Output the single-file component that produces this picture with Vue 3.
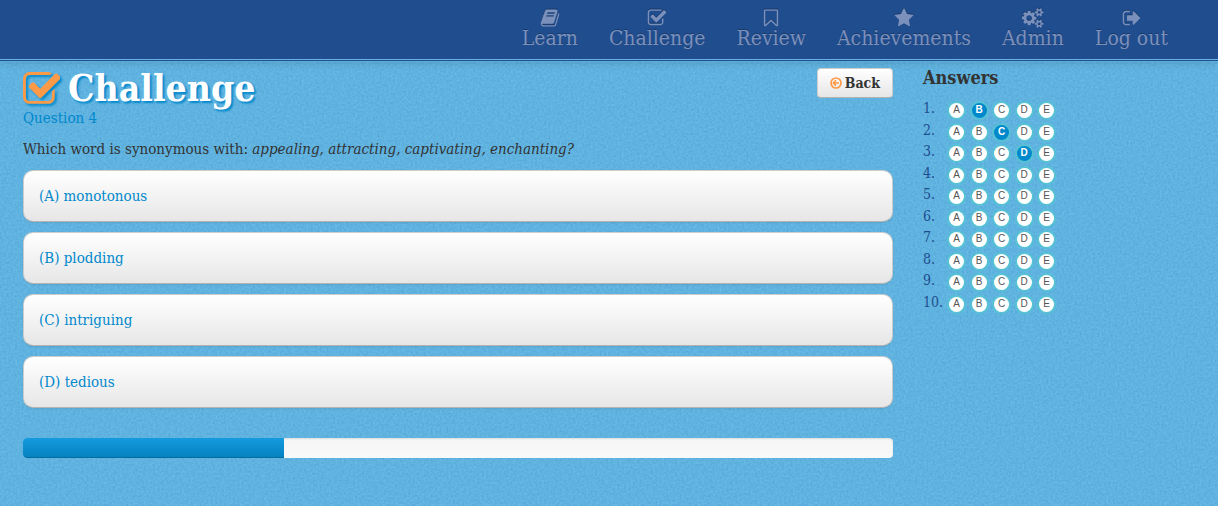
<script setup>
const navItems = [
  {
    label: 'Learn',
    box: '0 0 1792 1792',
    path: 'M1703 478q40 57 18 129l-275 906q-19 64-76.5 107.5t-122.5 43.5h-923q-77 0-148.5-53.5t-99.5-131.5q-24-67-2-127 0-4 3-27t4-37q1-8-3-21.5t-3-19.5q2-11 8-21t16.5-23.5 16.5-23.5q23-38 45-91.5t30-91.5q3-10 .5-30t-.5-28q3-11 17-28t17-23q21-36 42-92t25-90q1-9-2.5-32t.5-28q4-13 22-30.5t22-22.5q19-26 42.5-84.5t27.5-96.5q1-8-3-25.5t-2-26.5q2-8 9-18t18-23 17-21q8-12 16.5-30.5t15-35 16-36 19.5-32 26.5-23.5 36-11.5 47.5 5.5l-1 3q38-9 51-9h761q74 0 114 56t18 130l-274 906q-36 119-71.5 153.5t-128.5 34.5h-869q-27 0-38 15-11 16-1 43 24 70 144 70h923q29 0 56-15.5t35-41.5l300-987q7-22 5-57 38 15 59 43zm-1064 2q-4 13 2 22.5t20 9.5h608q13 0 25.5-9.5t16.5-22.5l21-64q4-13-2-22.5t-20-9.5h-608q-13 0-25.5 9.5t-16.5 22.5zm-83 256q-4 13 2 22.5t20 9.5h608q13 0 25.5-9.5t16.5-22.5l21-64q4-13-2-22.5t-20-9.5h-608q-13 0-25.5 9.5t-16.5 22.5z'
  },
  {
    label: 'Challenge',
    box: '0 0 1792 1792',
    path: 'M1472 930v318q0 119-84.5 203.5t-203.5 84.5h-832q-119 0-203.5-84.5t-84.5-203.5v-832q0-119 84.5-203.5t203.5-84.5h832q63 0 117 25 15 7 18 23 3 17-9 29l-49 49q-10 10-23 10-3 0-9-2-23-6-45-6h-832q-66 0-113 47t-47 113v832q0 66 47 113t113 47h832q66 0 113-47t47-113v-254q0-13 9-22l64-64q10-10 23-10 6 0 12 3 20 8 20 29zm231-489l-814 814q-24 24-57 24t-57-24l-430-430q-24-24-24-57t24-57l110-110q24-24 57-24t57 24l263 263 647-647q24-24 57-24t57 24l110 110q24 24 24 57t-24 57z'
  },
  {
    label: 'Review',
    box: '0 0 1792 1792',
    path: 'M1408 256h-1024v1242l423-406 89-85 89 85 423 406v-1242zm12-128q23 0 44 9 33 13 52.5 41t19.5 62v1289q0 34-19.5 62t-52.5 41q-19 8-44 8-48 0-83-32l-441-424-441 424q-36 33-83 33-23 0-44-9-33-13-52.5-41t-19.5-62v-1289q0-34 19.5-62t52.5-41q21-9 44-9h1048z'
  },
  {
    label: 'Achievements',
    box: '0 0 1792 1792',
    path: 'M1728 647q0 22-26 48l-363 354 86 500q1 7 1 20 0 21-10.5 35.5t-30.5 14.5q-19 0-40-12l-449-236-449 236q-22 12-40 12-21 0-31.5-14.5t-10.5-35.5q0-6 2-20l86-500-364-354q-25-27-25-48 0-37 56-46l502-73 225-455q19-41 49-41t49 41l225 455 502 73q56 9 56 46z'
  },
  {
    label: 'Admin',
    box: '0 0 1920 1792',
    path: 'M896 896q0-106-75-181t-181-75-181 75-75 181 75 181 181 75 181-75 75-181zm768 512q0-52-38-90t-90-38-90 38-38 90q0 53 37.5 90.5t90.5 37.5 90.5-37.5 37.5-90.5zm0-1024q0-52-38-90t-90-38-90 38-38 90q0 53 37.5 90.5t90.5 37.5 90.5-37.5 37.5-90.5zm-384 421v185q0 10-7 19.5t-16 10.5l-155 24q-11 35-32 76 34 48 90 115 7 11 7 20 0 12-7 19-23 30-82.5 89.5t-78.5 59.5q-11 0-21-7l-115-90q-37 19-77 31-11 108-23 155-7 24-30 24h-186q-11 0-20-7.5t-10-17.5l-23-153q-34-10-75-31l-118 89q-7 7-20 7-11 0-21-8-144-133-144-160 0-9 7-19 10-14 41-53t47-61q-23-44-35-82l-152-24q-10-1-17-9.5t-7-19.5v-185q0-10 7-19.5t16-10.5l155-24q11-35 32-76-34-48-90-115-7-11-7-20 0-12 7-20 22-30 82-89t79-59q11 0 21 7l115 90q34-18 77-32 11-108 23-154 7-24 30-24h186q11 0 20 7.5t10 17.5l23 153q34 10 75 31l118-89q8-7 20-7 11 0 21 8 144 133 144 160 0 8-7 19-12 16-42 54t-45 60q23 48 34 82l152 23q10 2 17 10.5t7 19.5zm640 533v140q0 16-149 31-12 27-30 52 51 113 51 138 0 4-4 7-122 71-124 71-8 0-46-47t-52-68q-20 2-30 2t-30-2q-14 21-52 68t-46 47q-2 0-124-71-4-3-4-7 0-25 51-138-18-25-30-52-149-15-149-31v-140q0-16 149-31 13-29 30-52-51-113-51-138 0-4 4-7 4-2 35-20t59-34 30-16q8 0 46 46.5t52 67.5q20-2 30-2t30 2q51-71 92-112l6-2q4 0 124 70 4 3 4 7 0 25-51 138 17 23 30 52 149 15 149 31zm0-1024v140q0 16-149 31-12 27-30 52 51 113 51 138 0 4-4 7-122 71-124 71-8 0-46-47t-52-68q-20 2-30 2t-30-2q-14 21-52 68t-46 47q-2 0-124-71-4-3-4-7 0-25 51-138-18-25-30-52-149-15-149-31v-140q0-16 149-31 13-29 30-52-51-113-51-138 0-4 4-7 4-2 35-20t59-34 30-16q8 0 46 46.5t52 67.5q20-2 30-2t30 2q51-71 92-112l6-2q4 0 124 70 4 3 4 7 0 25-51 138 17 23 30 52 149 15 149 31z'
  },
  {
    label: 'Log out',
    box: '0 0 1664 1792',
    path: 'M704 1440q0 4 1 20t.5 26.5-3 23.5-10 19.5-20.5 6.5h-320q-119 0-203.5-84.5t-84.5-203.5v-704q0-119 84.5-203.5t203.5-84.5h320q13 0 22.5 9.5t9.5 22.5q0 4 1 20t.5 26.5-3 23.5-10 19.5-20.5 6.5h-320q-66 0-113 47t-47 113v704q0 66 47 113t113 47h312l11.5 1 11.5 3 8 5.5 7 9 2 13.5zm928-544q0 26-19 45l-544 544q-19 19-45 19t-45-19-19-45v-288h-448q-26 0-45-19t-19-45v-384q0-26 19-45t45-19h448v-288q0-26 19-45t45-19 45 19l544 544q19 19 19 45z'
  }
]
const checkPath = navItems[1].path

const options = ['(A) monotonous', '(B) plodding', '(C) intriguing', '(D) tedious']
const letters = ['A', 'B', 'C', 'D', 'E']
const answers = ['B', 'C', 'D', '', '', '', '', '', '', '']
const progress = 30
</script>

<template>
  <div class="page">
    <svg class="grain" aria-hidden="true">
      <filter id="grain-filter" x="0" y="0" width="100%" height="100%" color-interpolation-filters="sRGB">
        <feTurbulence type="fractalNoise" baseFrequency="0.45" numOctaves="2" seed="4" />
        <feColorMatrix values="0 0 0 0 0.16  0 0 0 0 0.5  0 0 0 0 0.7  0.45 0 0 0 -0.1" />
      </filter>
      <rect width="100%" height="100%" filter="url(#grain-filter)" />
    </svg>

    <header class="topbar">
      <nav class="nav">
        <a v-for="item in navItems" :key="item.label" class="nav-link" href="#">
          <svg class="nav-icon" :viewBox="item.box" aria-hidden="true"><path :d="item.path" /></svg>
          <span>{{ item.label }}</span>
        </a>
      </nav>
    </header>

    <div class="columns">
      <main>
        <div class="heading">
          <div>
            <h1 class="title">
              <svg class="title-icon" viewBox="64 128 1640 1410" aria-hidden="true"><path :d="checkPath" /></svg>
              <span>Challenge</span>
            </h1>
            <p class="subtitle">Question 4</p>
          </div>
          <button class="back" type="button">
            <svg class="back-icon" viewBox="0 0 12 12" aria-hidden="true">
              <circle cx="6" cy="6" r="5" />
              <path d="M9 6H4M6 3.4L3.4 6L6 8.6" />
            </svg>
            Back
          </button>
        </div>

        <p class="question">
          Which word is synonymous with:
          <em>appealing, attracting, captivating, enchanting?</em>
        </p>

        <div class="options">
          <a v-for="option in options" :key="option" class="option" href="#">{{ option }}</a>
        </div>

        <div class="progress" role="progressbar" aria-label="Progress" :aria-valuenow="progress" aria-valuemin="0" aria-valuemax="100">
          <div class="bar" :style="{ width: progress + '%' }"></div>
        </div>
      </main>

      <aside>
        <h2 class="side-title">Answers</h2>
        <ol class="sheet">
          <li v-for="(answer, i) in answers" :key="i" class="row">
            <span class="number">{{ i + 1 }}.</span>
            <span class="bubbles">
              <span v-for="l in letters" :key="l" class="bubble" :class="{ chosen: l === answer }">{{ l }}</span>
            </span>
          </li>
        </ol>
      </aside>
    </div>
  </div>
</template>

<style>
body {
  margin: 0;
  background: #62b5e1;
}
</style>

<style scoped>
.page {
  position: relative;
  min-height: 100vh;
  background: #68bae6;
  color: #333;
  font-family: "DejaVu Serif Condensed", "DejaVu Serif", serif;
  font-size: 15px;
  line-height: 20px;
}
.grain {
  position: absolute;
  inset: 0;
  width: 100%;
  height: 100%;
}
.topbar {
  position: relative;
  box-sizing: border-box;
  height: 62px;
  padding: 8px 50px 0 20px;
  background: linear-gradient(#204d8e 59px, #69b3e3 59px, #69b3e3 60px, #204d8e 60px, #204d8e 61px, #5aaedb 61px);
  box-shadow: 0 1px 8px rgba(0, 0, 0, 0.15);
}
.nav {
  display: flex;
  justify-content: flex-end;
  gap: 31px;
}
.nav-link {
  display: flex;
  flex-direction: column;
  align-items: center;
  color: #7b90bb;
  font-size: 21px;
  line-height: 20px;
  text-decoration: none;
  text-shadow: 0 -1px 0 rgba(0, 0, 0, 0.25);
  white-space: nowrap;
}
.nav-icon {
  height: 20px;
  fill: currentColor;
  filter: drop-shadow(0 -1px 0 rgba(0, 0, 0, 0.25));
}
.columns {
  position: relative;
  display: grid;
  grid-template-columns: 870fr 272fr;
  gap: 30px;
  padding: 6px 23px 20px;
}
.heading {
  display: flex;
  justify-content: space-between;
  align-items: flex-start;
}
.title {
  display: flex;
  align-items: center;
  gap: 8px;
  margin: 0;
  color: #fff;
  font-size: 37px;
  line-height: 40px;
  text-shadow: 2px 2px 2px #0088cc;
}
.title-icon {
  width: 37px;
  height: 32px;
  fill: #fd9a47;
  filter: drop-shadow(2px 2px 1px #0088cc);
}
.subtitle {
  margin: 0;
  color: #0088cc;
}
.back {
  display: flex;
  align-items: center;
  gap: 3px;
  padding: 4px 12px;
  border: 1px solid #ccc;
  border-bottom-color: #b3b3b3;
  border-radius: 4px;
  background: linear-gradient(#fff, #e6e6e6);
  color: #333;
  font: bold 14px/20px "DejaVu Serif Condensed", "DejaVu Serif", serif;
}
.back-icon {
  width: 12px;
  height: 12px;
  fill: none;
  stroke: #fd9a47;
  stroke-width: 1.7;
}
.question {
  margin: 11px 0;
}
.options {
  display: grid;
  gap: 10px;
}
.option {
  padding: 15px;
  border: 1px solid #ccc;
  border-bottom-color: #b3b3b3;
  border-radius: 10px;
  background: linear-gradient(#fff, #e6e6e6);
  color: #0088cc;
  text-decoration: none;
  box-shadow: 0 1px 2px rgba(0, 0, 0, 0.08);
}
.progress {
  height: 20px;
  margin-top: 30px;
  border-radius: 4px;
  overflow: hidden;
  background: linear-gradient(#f5f5f5, #f9f9f9);
  box-shadow: inset 0 1px 2px rgba(0, 0, 0, 0.1);
}
.bar {
  height: 100%;
  background: linear-gradient(#149bdf, #0480be);
  box-shadow: inset 0 -1px 0 rgba(0, 0, 0, 0.15);
}
.side-title {
  margin: 0;
  font-size: 18px;
  line-height: 20px;
}
.sheet {
  display: grid;
  grid-template-rows: repeat(10, 1fr);
  min-height: 215px;
  margin: 10px 0 0;
  padding: 0;
  list-style: none;
}
.row {
  display: flex;
  align-items: flex-start;
  color: #204d8e;
  font-size: 14px;
}
.number {
  width: 26px;
}
.bubbles {
  display: flex;
  justify-content: space-between;
  width: 105px;
  padding-top: 5px;
}
.bubble {
  width: 15px;
  height: 15px;
  border-radius: 50%;
  background: #fff;
  box-shadow: 0 0 3px 1px #4fd0cb;
  color: #555;
  font: 10px/14px "Liberation Sans", Arial, sans-serif;
  text-align: center;
}
.chosen {
  background: #0088cc;
  color: #fff;
  font-weight: bold;
}
</style>
